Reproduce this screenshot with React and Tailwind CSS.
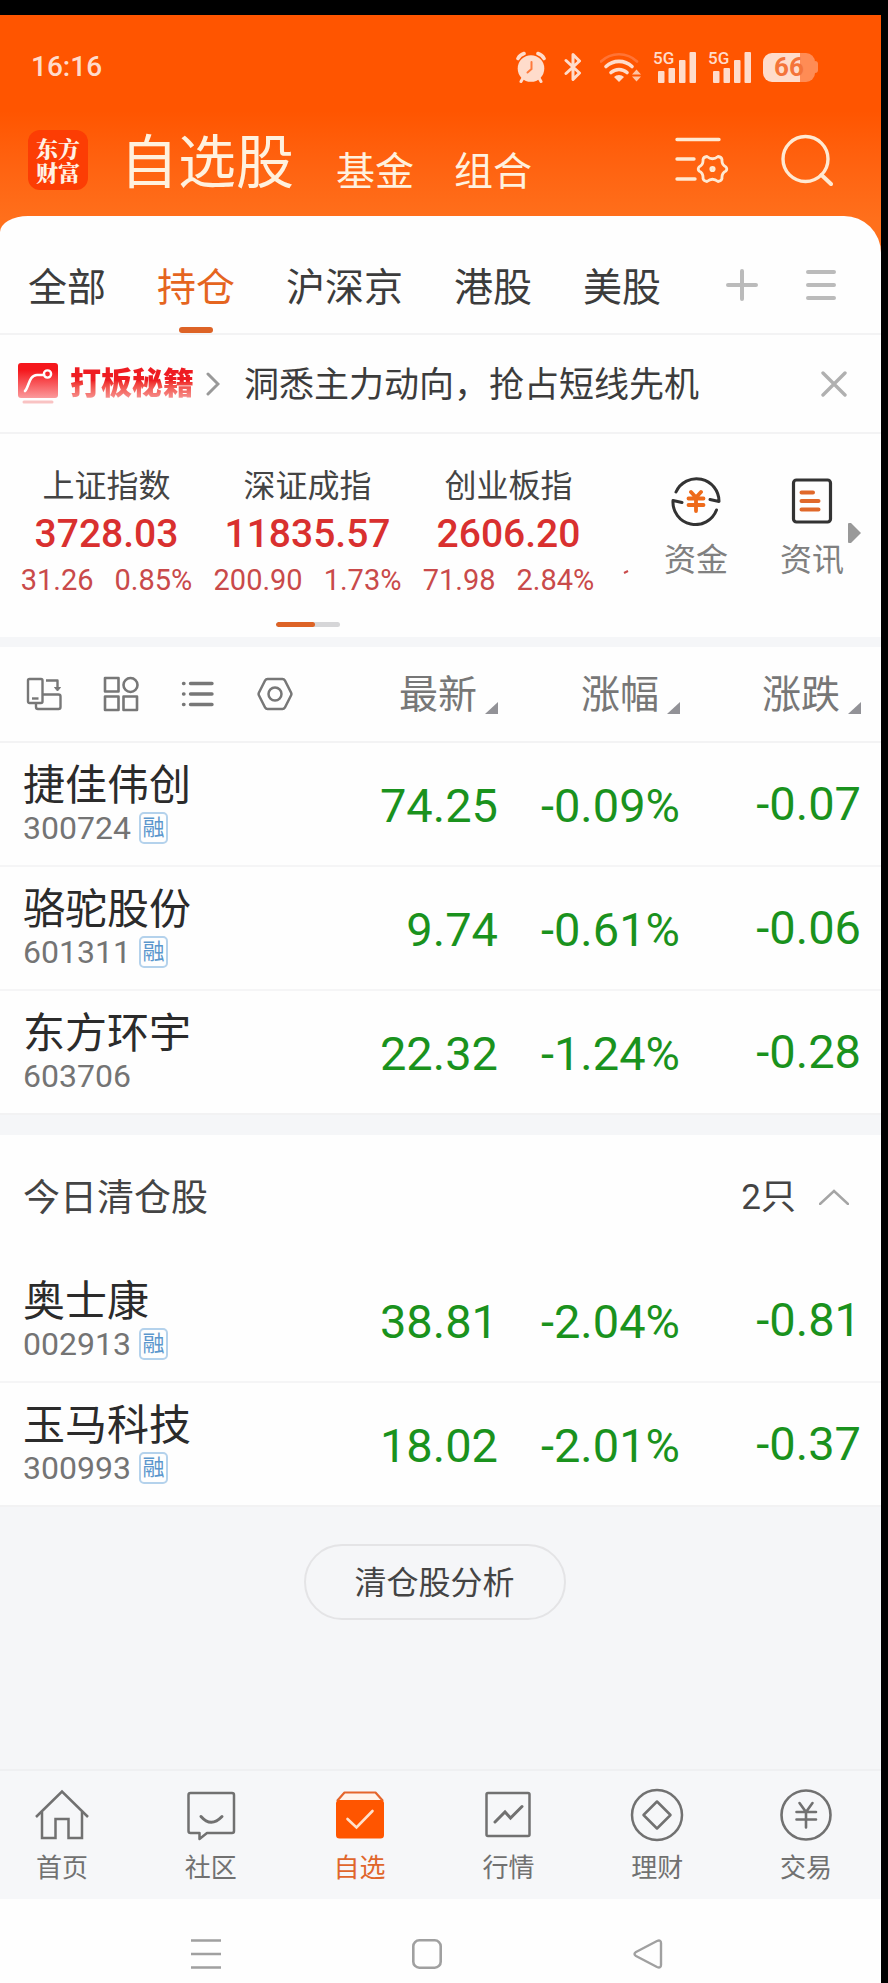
import { useState } from 'react'

const TABS = ['全部', '持仓', '沪深京', '港股', '美股']

const INDICES = [
  { name: '上证指数', value: '3728.03', change: '31.26', percent: '0.85%' },
  { name: '深证成指', value: '11835.57', change: '200.90', percent: '1.73%' },
  { name: '创业板指', value: '2606.20', change: '71.98', percent: '2.84%' },
]

const COLUMNS = ['最新', '涨幅', '涨跌']

const HOLDINGS = [
  { code: '300724', name: '捷佳伟创', margin: true, price: '74.25', percent: '-0.09%', change: '-0.07' },
  { code: '601311', name: '骆驼股份', margin: true, price: '9.74', percent: '-0.61%', change: '-0.06' },
  { code: '603706', name: '东方环宇', margin: false, price: '22.32', percent: '-1.24%', change: '-0.28' },
]

const CLEARED = [
  { code: '002913', name: '奥士康', margin: true, price: '38.81', percent: '-2.04%', change: '-0.81' },
  { code: '300993', name: '玉马科技', margin: true, price: '18.02', percent: '-2.01%', change: '-0.37' },
]

/* Status bar icons */

function AlarmIcon() {
  return (
    <svg width="30" height="32" viewBox="0 0 30 32" fill="none" aria-hidden="true">
      <path d="M2 7.500 A10 10 0 0 1 8 2.500 M28 7.500 A10 10 0 0 0 22 2.500" stroke="#ffdccb" strokeWidth="3.6" strokeLinecap="round" />
      <path d="M7 27 L5 30.5 M23 27 L25 30.5" stroke="#ffdccb" strokeWidth="3" strokeLinecap="round" />
      <circle cx="15" cy="17.5" r="13.3" fill="#ffdccb" />
      <path d="M15.5 11 V18 L11.5 21.5" stroke="#ff7a3c" strokeWidth="2" strokeLinecap="round" />
    </svg>
  )
}

function BluetoothIcon() {
  return (
    <svg width="18" height="30" viewBox="0 0 18 30" fill="none" aria-hidden="true">
      <path d="M2 8.5 L15.5 21 L9 27.5 V2.5 L15.5 9 L2 21.5" stroke="#ffdccb" strokeWidth="3" strokeLinejoin="round" strokeLinecap="round" />
    </svg>
  )
}

function WifiIcon() {
  return (
    <svg width="41" height="30" viewBox="0 0 41 30" fill="none" aria-hidden="true">
      <path d="M1 9.500 A26 26 0 0 1 37 9.500" stroke="#ff7436" strokeWidth="2.6" strokeLinecap="round" />
      <path d="M6 14.500 A19 19 0 0 1 32 14.500" stroke="#ffdccb" strokeWidth="3.6" strokeLinecap="round" />
      <path d="M11 20.500 A12 12 0 0 1 27 20.500" stroke="#ffdccb" strokeWidth="3.6" strokeLinecap="round" />
      <path d="M19 30 L14 25 A7 7 0 0 1 24 25 Z" fill="#ffdccb" />
      <path d="M36.500 17.500 L41 22.500 H32 Z M32 24.500 H41 L36.500 29.500 Z" fill="#ffc4a4" />
    </svg>
  )
}

function SignalIcon() {
  return (
    <span className="relative flex h-8 w-[43px] items-end justify-end">
      <span className="absolute top-0 left-0 text-[17px] leading-[15px] font-medium">5G</span>
      <svg width="38" height="31" viewBox="0 0 38 31" fill="#ffdccb" aria-hidden="true">
        <rect x="0" y="19" width="6.500" height="12" rx="1" />
        <rect x="10.500" y="16" width="6.500" height="15" rx="1" />
        <rect x="21" y="8" width="6.500" height="23" rx="1" />
        <rect x="31.500" y="0" width="6.500" height="31" rx="1" />
      </svg>
    </span>
  )
}

function Battery() {
  return (
    <span className="flex items-center">
      <span className="flex h-[29px] w-[52px] items-center justify-center rounded-[9px] bg-linear-to-r from-[#ffdccb] from-72% to-[#ff8c55] to-72% text-[26px] leading-[29px] font-bold text-[#f4743a]">
        66
      </span>
      <span className="h-3 w-[3px] rounded-r-full bg-[#ff8c55]" />
    </span>
  )
}

/* Header and toolbar icons */

function FilterIcon() {
  return (
    <svg width="54" height="48" viewBox="0 0 54 48" fill="none" stroke="#ffe9d2" strokeWidth="3.400" strokeLinecap="round" strokeLinejoin="round" aria-hidden="true">
      <path d="M2 3.500 H44 M2 23 H19 M2 43 H20" />
      <path
        strokeWidth="2.800"
        d="M32 20.500 Q37.500 25 43 20.500 Q46.500 21 47 23.500 Q46.500 29 51 31 Q52.500 33 51 35 Q46.500 37 47 42.500 Q46.500 45 43 45.500 Q37.500 41 32 45.500 Q28.500 45 28 42.500 Q28.500 37 24 35 Q22.500 33 24 31 Q28.500 29 28 23.500 Q28.500 21 32 20.500 Z"
      />
      <circle cx="37.500" cy="33" r="1.400" />
    </svg>
  )
}

function SearchIcon() {
  return (
    <svg width="52" height="52" viewBox="0 0 52 52" fill="none" stroke="#ffe9d2" strokeWidth="3.400" strokeLinecap="round" aria-hidden="true">
      <circle cx="24.500" cy="25" r="22.500" />
      <path d="M40.500 41 L50 50" strokeWidth="4" />
    </svg>
  )
}

function RotateIcon() {
  return (
    <svg width="36" height="36" viewBox="0 0 36 36" fill="none" stroke="#777" strokeWidth="2.400" strokeLinejoin="round" aria-hidden="true">
      <rect x="2" y="3" width="14.500" height="24" rx="1.500" />
      <path d="M6 22.500 H12.500" />
      <path d="M20 4.500 H31.500 V13" />
      <path d="M28.500 11.500 H34.500 L31.500 15 Z" fill="#777" strokeWidth="1" />
      <path d="M16.500 18.500 H32.500 Q34.500 18.500 34.500 20.500 V31 Q34.500 33 32.500 33 H12 Q10 33 10 31 V27" />
    </svg>
  )
}

function GridIcon() {
  return (
    <svg width="36" height="36" viewBox="0 0 36 36" fill="none" stroke="#777" strokeWidth="2.600" strokeLinejoin="round" aria-hidden="true">
      <rect x="2" y="2" width="13.500" height="13.500" />
      <circle cx="27.500" cy="9" r="7" />
      <rect x="2" y="20.500" width="13.500" height="13.500" />
      <rect x="20.500" y="20.500" width="13.500" height="13.500" />
    </svg>
  )
}

function ListIcon() {
  return (
    <svg width="36" height="36" viewBox="0 0 36 36" fill="none" stroke="#777" strokeWidth="3.400" strokeLinecap="round" aria-hidden="true">
      <path d="M10.500 7.500 H32 M10.500 18 H32 M10.500 28.500 H32" />
      <path d="M3.500 7.500 H4 M3.500 18 H4 M3.500 28.500 H4" />
    </svg>
  )
}

function NutIcon() {
  return (
    <svg width="36" height="36" viewBox="0 0 36 36" fill="none" stroke="#777" strokeWidth="2.500" strokeLinejoin="round" aria-hidden="true">
      <path d="M10.500 3 H25.500 Q27 3 27.800 4.300 L34 16.500 Q34.800 18 34 19.500 L27.800 31.700 Q27 33 25.500 33 H10.500 Q9 33 8.200 31.700 L2 19.500 Q1.200 18 2 16.500 L8.200 4.300 Q9 3 10.500 3 Z" />
      <circle cx="18" cy="18" r="6.500" />
    </svg>
  )
}

const TOOLS = [
  { label: '横屏', Icon: RotateIcon },
  { label: '宫格', Icon: GridIcon },
  { label: '列表', Icon: ListIcon },
  { label: '设置', Icon: NutIcon },
]

function FundIcon() {
  return (
    <svg width="50" height="50" viewBox="0 0 50 50" fill="none" aria-hidden="true">
      <g stroke="#333" strokeWidth="3" strokeLinecap="round" strokeLinejoin="round">
        <path d="M5 16 A22.500 22.500 0 0 1 48 25.500 L39 23.500" />
        <path d="M45.500 34 A22.500 22.500 0 0 1 2 24.500 L11 26.500" />
      </g>
      <path d="M20 16 L25 21.500 L30 16 M17.500 22.500 H32.500 M17.500 29 H32.500 M25 21.500 V35" stroke="#ee6a1a" strokeWidth="3.800" strokeLinecap="round" />
    </svg>
  )
}

function NewsIcon() {
  return (
    <svg width="50" height="50" viewBox="0 0 50 50" fill="none" aria-hidden="true">
      <rect x="6.500" y="4" width="37" height="42" rx="3" stroke="#333" strokeWidth="3.200" />
      <path d="M14.500 16.500 H26 M14.500 25 H31.500 M14.500 33.500 H31.500" stroke="#e0682a" strokeWidth="4" strokeLinecap="round" />
    </svg>
  )
}

/* Bottom navigation icons */

function HomeIcon() {
  return (
    <svg width="54" height="54" viewBox="0 0 54 54" fill="none" stroke="#717171" strokeWidth="2.500" aria-hidden="true">
      <path d="M1 29 L27 3.500 L53 29" />
      <path d="M7 24 V50 H20.500 V31 H33.500 V50 H47 V24" />
    </svg>
  )
}

function CommunityIcon() {
  return (
    <svg width="54" height="54" viewBox="0 0 54 54" fill="none" stroke="#717171" strokeWidth="2.500" strokeLinejoin="round" aria-hidden="true">
      <path d="M6.500 5 H48 Q50 5 50 7 V43 Q50 45 48 45 H23 L15.500 51 V45 H6.500 Q4.500 45 4.500 43 V7 Q4.500 5 6.500 5 Z" />
      <path d="M17 28.500 Q27 40 38 28.500" strokeWidth="3" strokeLinecap="round" />
    </svg>
  )
}

function WatchIcon() {
  return (
    <svg width="54" height="54" viewBox="0 0 54 54" fill="none" aria-hidden="true">
      <path d="M4 13 L11.500 4.500 H42.500 L50 13" fill="#fff3ea" stroke="#e5652a" strokeWidth="2.200" strokeLinejoin="round" />
      <rect x="3" y="12" width="48" height="38.500" rx="3.500" fill="#ff5500" />
      <path d="M14.500 31 L23.500 39.500 L39.500 23" stroke="#ffe1cc" strokeWidth="2.600" strokeLinecap="round" />
    </svg>
  )
}

function MarketIcon() {
  return (
    <svg width="54" height="54" viewBox="0 0 54 54" fill="none" stroke="#717171" strokeWidth="2.500" aria-hidden="true">
      <rect x="5.500" y="5" width="43" height="43" rx="1.500" />
      <path d="M14 34 L24 24 L29.500 30 L41 18.500" strokeWidth="3" strokeLinecap="round" />
    </svg>
  )
}

function WealthIcon() {
  return (
    <svg width="54" height="54" viewBox="0 0 54 54" fill="none" stroke="#717171" strokeWidth="2.500" strokeLinejoin="round" aria-hidden="true">
      <circle cx="27" cy="27" r="25" />
      <path d="M27 13.500 L40.500 27 L27 40.500 L13.500 27 Z" />
    </svg>
  )
}

function TradeIcon() {
  return (
    <svg width="54" height="54" viewBox="0 0 54 54" fill="none" stroke="#717171" strokeWidth="2.600" strokeLinecap="round" aria-hidden="true">
      <circle cx="27" cy="27" r="24.500" />
      <path d="M20.500 15 L27 24 L33.500 15 M17.500 24 H37 M17.500 31.500 H37 M27 24 V39.500" />
    </svg>
  )
}

const NAV_ITEMS = [
  { label: '首页', Icon: HomeIcon },
  { label: '社区', Icon: CommunityIcon },
  { label: '自选', Icon: WatchIcon },
  { label: '行情', Icon: MarketIcon },
  { label: '理财', Icon: WealthIcon },
  { label: '交易', Icon: TradeIcon },
]

function StockRow({ stock }) {
  return (
    <tr className="h-[124px] border-b-2 border-[#f5f5f6] text-right text-[47px] leading-[56px] text-[#1a921d] last:border-[#f2f2f3]">
      <th scope="row" className="pt-1 pl-[23px] text-left font-normal">
        <span className="block text-[42px] leading-[44px] text-[#2b2b2b]">{stock.name}</span>
        <span className="flex h-10 items-center gap-2 text-[32px] leading-10 text-[#747474]">
          {stock.code}
          {stock.margin && (
            <span className="flex h-8 w-[29px] items-center justify-center rounded-[5px] border-2 border-[#b4d2ec] text-[22px] leading-7 text-[#5b97cd]">融</span>
          )}
        </span>
      </th>
      <td className="w-[182px] pt-1">{stock.price}</td>
      <td className="w-[182px] pt-1">{stock.percent}</td>
      <td className="w-[201px] pr-5">{stock.change}</td>
    </tr>
  )
}

export default function App() {
  const [activeTab, setActiveTab] = useState('持仓')
  const [activeNav, setActiveNav] = useState('自选')
  const [showBanner, setShowBanner] = useState(true)
  const [showCleared, setShowCleared] = useState(true)

  return (
    <div className="min-h-screen bg-black pt-[15px] pr-[7px] font-['Roboto','Noto_Sans_CJK_SC',sans-serif]">
      <div className="flex min-h-[calc(100vh-15px)] flex-col bg-[#f5f6f8]">
        <div className="bg-linear-to-b from-[#ff5500] from-30% to-[#ff701c] to-65%">
          {/* Status bar */}
          <div className="flex h-[104px] items-center pr-[63px] pl-[31px] text-[#ffdccb]">
            <span className="mr-auto text-[28px] font-medium">16:16</span>
            <div className="flex items-center gap-3">
              <div className="flex items-center gap-[18px]">
                <AlarmIcon />
                <BluetoothIcon />
                <WifiIcon />
              </div>
              <SignalIcon />
              <SignalIcon />
              <Battery />
            </div>
          </div>

          {/* Title bar */}
          <header className="flex h-[97px] items-center pr-12 pb-4 pl-7">
            <a href="#home" className="flex h-[60px] w-[60px] items-center justify-center rounded-xl bg-[#fc3d04]">
              <span className="w-11 text-center font-['Noto_Serif_CJK_SC','Noto_Sans_CJK_SC',serif] text-[22px] leading-6 font-black break-all text-[#fff1e4]">东方财富</span>
            </a>
            <nav className="ml-8 flex items-end pt-1.5 text-[#fff1de]">
              <h1 className="text-[58px] leading-[58px]">自选股</h1>
              <a href="#fund" className="ml-[42px] text-[39px] leading-10">基金</a>
              <a href="#group" className="ml-10 text-[39px] leading-10">组合</a>
            </nav>
            <button aria-label="筛选" className="ml-auto"><FilterIcon /></button>
            <button aria-label="搜索" className="ml-[52px]"><SearchIcon /></button>
          </header>

          {/* Market tabs */}
          <div className="flex h-[119px] rounded-tl-[28px_16px] rounded-tr-[37px] border-b-2 border-[#f3f3f4] bg-[#fefefe] pr-[45px] pl-7">
            <div className="flex gap-[51px]">
              {TABS.map(tab => (
                <button
                  key={tab}
                  onClick={() => setActiveTab(tab)}
                  className={activeTab === tab
                    ? "relative h-full pt-[27px] text-[39px] leading-[90px] text-[#e5651f]"
                    : "relative h-full pt-[27px] text-[39px] leading-[90px] text-[#3c3c3c]"
                  }
                >
                  {tab}
                  {activeTab === tab && (
                    <span className="absolute bottom-0 left-1/2 h-1.5 w-[34px] -translate-x-1/2 rounded-full bg-[#dd6326]" />
                  )}
                </button>
              ))}
            </div>
            <div className="ml-auto flex items-center gap-12 pt-5">
              <button aria-label="添加">
                <svg width="32" height="32" viewBox="0 0 32 32" stroke="#bbb" strokeWidth="4" strokeLinecap="round" aria-hidden="true">
                  <path d="M2 16 H30 M16 2 V30" />
                </svg>
              </button>
              <button aria-label="菜单">
                <svg width="30" height="32" viewBox="0 0 30 32" stroke="#bbb" strokeWidth="4" strokeLinecap="round" aria-hidden="true">
                  <path d="M2 3 H28 M2 16 H28 M2 29 H28" />
                </svg>
              </button>
            </div>
          </div>
        </div>

        {/* Promo banner */}
        {showBanner && (
          <div className="flex h-[99px] items-center border-b-2 border-[#f3f3f4] bg-[#fefefe] pr-[34px] pl-[18px]">
            <a href="#promo" className="flex items-center">
              <svg width="40" height="42" viewBox="0 0 40 42" fill="none" aria-hidden="true">
                <defs>
                  <linearGradient id="promo" x1="0" y1="0" x2="0" y2="1">
                    <stop offset="0.200" stopColor="#f5171c" />
                    <stop offset="1" stopColor="#fb9a9c" />
                  </linearGradient>
                </defs>
                <rect width="40" height="35" rx="3" fill="url(#promo)" />
                <path d="M7 28 C11 24 11 12 19 12 H26" stroke="#fff" strokeWidth="2.600" strokeLinecap="round" />
                <circle cx="29.500" cy="11" r="3.600" stroke="#fff" strokeWidth="2.400" />
                <path d="M6 39 H34" stroke="#f9c3c3" strokeWidth="3" strokeLinecap="round" />
              </svg>
              <span className="ml-3 bg-linear-to-b from-[#ee1c22] from-40% to-[#f5a0a2] bg-clip-text text-[31px] leading-9 font-black text-transparent">打板秘籍</span>
              <svg className="ml-3" width="14" height="24" viewBox="0 0 14 24" fill="none" stroke="#999" strokeWidth="3" strokeLinecap="round" aria-hidden="true">
                <path d="M2 2 L12 12 L2 22" />
              </svg>
              <span className="ml-6 pt-1 text-[35px] leading-10 text-[#3c3c3c]">洞悉主力动向，抢占短线先机</span>
            </a>
            <button aria-label="关闭" className="ml-auto" onClick={() => setShowBanner(false)}>
              <svg width="26" height="26" viewBox="0 0 26 26" stroke="#b0b0b0" strokeWidth="3.400" strokeLinecap="round" aria-hidden="true">
                <path d="M2 2 L24 24 M24 2 L2 24" />
              </svg>
            </button>
          </div>
        )}

        {/* Index quotes */}
        <section className="flex flex-col bg-[#fefefe] pt-[30px] pb-2.5">
          <div className="flex h-[148px] pl-1.5">
            <div className="flex overflow-hidden">
              {INDICES.map(item => (
                <a key={item.name} href="#index" className="flex w-[201px] flex-col items-center whitespace-nowrap">
                  <span className="text-[32px] leading-[44px] text-[#444]">{item.name}</span>
                  <span className="text-[39px] leading-[52px] font-medium text-[#d9302f]">{item.value}</span>
                  <span className="flex gap-[21px] text-[29px] leading-10 text-[#c94a4a]">
                    <span>{item.change}</span>
                    <span>{item.percent}</span>
                  </span>
                </a>
              ))}
              {/* leading edge of the next quote in the carousel */}
              <svg className="mt-[105px] ml-3.5" width="6" height="5" viewBox="0 0 6 5" stroke="#c94a4a" strokeWidth="2" aria-hidden="true">
                <path d="M1 4 L5 2" />
              </svg>
            </div>
            <div className="ml-auto flex items-start gap-[52px] pt-3 text-[32px] leading-10 text-[#808080]">
              <a href="#money" className="flex flex-col items-center gap-3.5">
                <FundIcon />
                <span>资金</span>
              </a>
              <a href="#news" className="flex flex-col items-center gap-3.5">
                <NewsIcon />
                <span>资讯</span>
              </a>
            </div>
            <button aria-label="更多" className="mt-[59px] mr-5 ml-1 h-5">
              <svg width="13" height="20" viewBox="0 0 13 20" fill="#999" aria-hidden="true">
                <path d="M0 1 Q0 0 1 0 L3 0 L13 10 L3 20 L1 20 Q0 20 0 19 Z" />
              </svg>
            </button>
          </div>
          <div className="mt-2.5 ml-[276px] h-[5px] w-16 overflow-hidden rounded-full bg-[#d6d6d8]">
            <div className="h-full w-[39px] rounded-full bg-[#dd6326]" />
          </div>
        </section>

        {/* Holdings */}
        <table className="mt-2.5 w-full table-fixed bg-[#fefefe]">
          <thead>
            <tr className="h-[95px] border-b-2 border-[#f3f3f4] text-right text-[39px] leading-[42px] text-[#777]">
              <th className="pl-[26px]">
                <div className="flex gap-[41px]">
                  {TOOLS.map(({ label, Icon }) => (
                    <button key={label} aria-label={label}><Icon /></button>
                  ))}
                </div>
              </th>
              {COLUMNS.map(col => (
                <th key={col} scope="col" className="w-[182px] font-normal last:w-[201px] last:pr-5">
                  <button className="inline-flex items-end gap-2 align-middle">
                    {col}
                    <svg className="mb-0.5" width="13" height="12" viewBox="0 0 13 12" fill="#929297" aria-hidden="true">
                      <path d="M13 0 V12 H0 Z" />
                    </svg>
                  </button>
                </th>
              ))}
            </tr>
          </thead>
          <tbody>
            {HOLDINGS.map(stock => <StockRow key={stock.code} stock={stock} />)}
          </tbody>
        </table>

        {/* Positions closed today */}
        <section className="mt-5 bg-[#fefefe]">
          <button
            className="flex h-[123px] w-full items-center justify-between pt-1 pr-8 pl-[23px] text-[#444]"
            aria-expanded={showCleared}
            onClick={() => setShowCleared(prev => !prev)}
          >
            <span className="text-[37px]">今日清仓股</span>
            <span className="flex items-center gap-[23px] text-[35px]">
              2只
              <svg className={showCleared ? "mb-1" : "mb-1 rotate-180"} width="30" height="16" viewBox="0 0 30 16" fill="none" stroke="#a5a5a5" strokeWidth="2.400" strokeLinecap="round" aria-hidden="true">
                <path d="M1 15 L15 2 L29 15" />
              </svg>
            </span>
          </button>
          {showCleared && (
            <table className="w-full table-fixed">
              <tbody>
                {CLEARED.map(stock => <StockRow key={stock.code} stock={stock} />)}
              </tbody>
            </table>
          )}
        </section>

        <div className="flex flex-1 items-start justify-center pt-[37px] pr-3 pb-10">
          <button className="h-[76px] w-[262px] rounded-full border-2 border-[#e4e4e6] pt-0.5 text-[32px] text-[#444]">清仓股分析</button>
        </div>

        {/* Bottom navigation */}
        <nav className="flex h-[130px] justify-between border-t-2 border-[#eff0f2] bg-[#f6f7f9] pt-[17px] pr-[35px] pl-[22px]">
          {NAV_ITEMS.map(({ label, Icon }) => (
            <button
              key={label}
              onClick={() => setActiveNav(label)}
              className={activeNav === label
                ? "flex w-20 flex-col items-center gap-2 text-[26px] leading-9 text-[#e0662c]"
                : "flex w-20 flex-col items-center gap-2 text-[26px] leading-9 text-[#717171]"
              }
            >
              <Icon />
              <span>{label}</span>
            </button>
          ))}
        </nav>

        {/* System navigation */}
        <div className="flex h-[84px] items-center justify-center gap-[191px] bg-[#fefefe] pt-[26px] pr-7">
          <button aria-label="最近任务">
            <svg width="30" height="30" viewBox="0 0 30 30" stroke="#a0a0a0" strokeWidth="2.600" aria-hidden="true">
              <path d="M0 1.500 H30 M0 15 H30 M0 28.500 H30" />
            </svg>
          </button>
          <button aria-label="主屏幕">
            <svg width="30" height="30" viewBox="0 0 30 30" fill="none" stroke="#a0a0a0" strokeWidth="2.600" aria-hidden="true">
              <rect x="1.300" y="1.300" width="27.400" height="27.400" rx="6" />
            </svg>
          </button>
          <button aria-label="返回">
            <svg width="30" height="30" viewBox="0 0 30 30" fill="none" stroke="#a0a0a0" strokeWidth="2.400" strokeLinejoin="round" aria-hidden="true">
              <path d="M3 13 L24 2 Q28 0.500 28 4 V26 Q28 29.500 24 28 L3 17 Q0 15 3 13 Z" />
            </svg>
          </button>
        </div>
      </div>
    </div>
  )
}
